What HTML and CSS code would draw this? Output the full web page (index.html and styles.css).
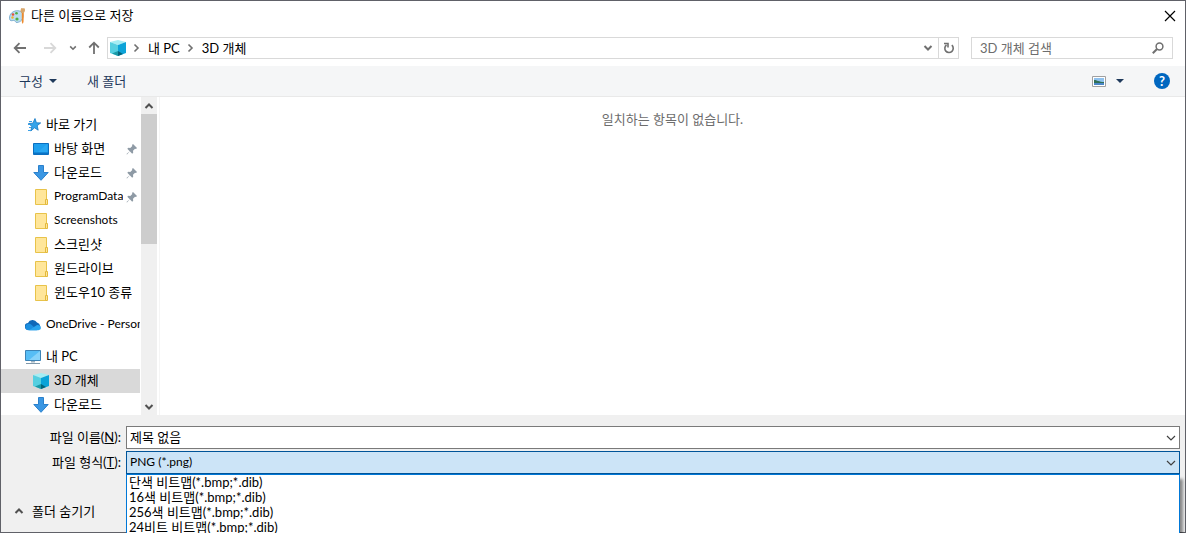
FILE: index.html
```html
<!DOCTYPE html>
<html lang="ko">
<head>
    <meta charset="UTF-8">
    <meta name="viewport" content="width=device-width, initial-scale=1.0">
    <title>다른 이름으로 저장</title>
    <link rel="stylesheet" href="styles.css">
</head>
<body>
    <!-- 공용 아이콘 -->
    <svg class="defs" aria-hidden="true">
        <symbol id="i-folder" viewBox="0 0 16 16">
            <path d="M2.5.5h11v15h-11z" fill="#ffe69a" stroke="#e8c34a"/>
            <path d="M12.500 10.500h2v5h-2z" fill="#ffe69a" stroke="#e3b93c"/>
        </symbol>
        <symbol id="i-cube" viewBox="0 0 16 16">
            <path d="M0 2 8 0l8 2-8 3z" fill="#a5edf3"/>
            <path d="M0 2 8 5v11l-8-3z" fill="#55cfe0"/>
            <path d="M16 2 8 5v11l8-3z" fill="#0ba3d8"/>
            <path d="M2 13.500l6-2.500v5z" fill="#1a9aa8"/>
            <path d="M8 11l5 3-5 2z" fill="#06647a"/>
        </symbol>
        <symbol id="i-down" viewBox="0 0 16 16">
            <path d="M5.500.5h5v7h4.700L8 15.300.8 7.500h4.700z" fill="#3b97e3" stroke="#2a80cc"/>
        </symbol>
        <symbol id="i-pin" viewBox="0 0 12 12">
            <path d="M7 1l4 4-1 1-1-.3-2 2 .2 2-1 1-2.400-2.400L1 11.500.5 11l3.200-2.800L1.300 5.800l1-1 2 .2 2-2L6 2z" fill="#8e9aa5"/>
        </symbol>
        <symbol id="i-chev" viewBox="0 0 10 10">
            <path d="M1.500 3 5 6.500 8.500 3" fill="none" stroke="currentColor" stroke-width="2"/>
        </symbol>
        <symbol id="i-thin" viewBox="0 0 10 10">
            <path d="M1 3l4 4 4-4" fill="none" stroke="currentColor" stroke-width="1.200"/>
        </symbol>
    </svg>

    <div class="window">
        <header class="title">
            <svg class="icon" viewBox="0 0 16 16">
                <path d="M6 3c4-1 7.500.5 8 4 .5 4-2 7-6 7.500-1.800.2-1.500-1.700-2.600-2-1.500-.4-3 .9-4.300-.3C-.3 10.500.4 4.500 6 3z" fill="#b9dcf0" stroke="#6da3c8" stroke-width=".8"/>
                <circle cx="4" cy="6.500" r="1.300" fill="#e8503a"/>
                <circle cx="7.500" cy="5.300" r="1.300" fill="#4fae45"/>
                <circle cx="3.500" cy="9.500" r="1.200" fill="#f7b42c"/>
                <circle cx="8" cy="11" r="1.600" fill="#4fae45"/>
                <path d="M12.800 5h2l-.3 9-.8 2-.9-2z" fill="#ee8a2c"/>
                <path d="M12.500 5c-2-2-.5-3-.3-5 1.500.8 2.500-.3 3.500.5.500 1.500.5 3-.9 4.500z" fill="#d9a66a"/>
            </svg>
            <h1>다른 이름으로 저장</h1>
            <button class="close" aria-label="닫기">
                <svg viewBox="0 0 12 12"><path d="M1 1l10 10M11 1 1 11" stroke="#000" stroke-width="1.200"/></svg>
            </button>
        </header>

        <nav class="nav">
            <button class="arrow" aria-label="뒤로"><svg viewBox="0 0 14 12"><path d="M13 6H2M6.500 1.200 1.700 6l4.800 4.800" fill="none" stroke="#707070" stroke-width="1.800"/></svg></button>
            <button class="arrow" aria-label="앞으로" disabled><svg viewBox="0 0 14 12"><path d="M1 6h11M7.500 1.200 12.300 6l-4.800 4.800" fill="none" stroke="#d8d8d8" stroke-width="1.800"/></svg></button>
            <button class="recent" aria-label="최근 위치"><svg viewBox="0 0 10 10"><use href="#i-chev"/></svg></button>
            <button class="up" aria-label="위로"><svg viewBox="0 0 12 14"><path d="M6 13V2M1.200 6.500 6 1.700l4.800 4.800" fill="none" stroke="#707070" stroke-width="1.800"/></svg></button>
            <div class="address">
                <svg class="icon"><use href="#i-cube"/></svg>
                <svg class="sep" viewBox="0 0 10 10"><path d="M3.500 1.500 7 5 3.500 8.500" fill="none" stroke="#707070" stroke-width="1.600"/></svg>
                <a href="#">내 PC</a>
                <svg class="sep" viewBox="0 0 10 10"><path d="M3.500 1.500 7 5 3.500 8.500" fill="none" stroke="#707070" stroke-width="1.600"/></svg>
                <a href="#">3D 개체</a>
                <button class="drop" aria-label="이전 위치"><svg viewBox="0 0 10 10"><use href="#i-chev"/></svg></button>
                <button class="reload" aria-label="새로 고침"><svg viewBox="0 0 12 12"><path d="M8.800 3.200A4.200 4.200 0 1 1 3.500 3M1 1.500h4v4" fill="none" stroke="#707070" stroke-width="1.600"/></svg></button>
            </div>
            <div class="search">
                <input type="text" aria-label="검색" placeholder="3D 개체 검색">
                <svg viewBox="0 0 12 12"><circle cx="7.500" cy="4.500" r="3.400" fill="none" stroke="#707070" stroke-width="1.500"/><path d="M5 7 .8 11.200" stroke="#707070" stroke-width="2"/></svg>
            </div>
        </nav>

        <div class="toolbar">
            <button>구성 <i class="caret"></i></button>
            <button>새 폴더</button>
            <button class="view" aria-label="보기">
                <svg viewBox="0 0 14 11"><path d="M.5.5h13v10H.5z" fill="#fff" stroke="#a0a0a0"/><path d="M2 2h10v7H2z" fill="#8fc1ee"/><path d="M2 4c3 0 5 2 10 2v1H2z" fill="#2f6f55"/><path d="M2 7h10v2H2z" fill="#4a86c8"/></svg>
                <i class="caret"></i>
            </button>
            <button class="help" aria-label="도움말">?</button>
        </div>

        <main class="body">
            <aside class="side">
                <ul class="tree">
                    <li class="root">
                        <svg class="icon" viewBox="0 0 16 16"><path d="M10 1.500l1.400 4.300 4.300.1-3.500 2.800 1 4.500-3.700-2.400L5.800 14l1-4.700L3.500 6.500l4.400-.3z" fill="#35a4ea" stroke="#1579c4" stroke-width=".8"/><path d="M4 4.500h3M3 7.500h2M4 10.500h2M3 13.500h3" stroke="#3aa0e6"/></svg>
                        <span>바로 가기</span>
                    </li>
                    <li>
                        <svg class="icon" viewBox="0 0 16 16"><path d="M.5 2.500h15v11H.5z" fill="#1fa0ee" stroke="#0b6fc0"/><path d="M1 11.500h14V13H1z" fill="#0b72c4"/><path d="M14 3 5 11h9z" fill="#2ba8f2"/></svg>
                        <span>바탕 화면</span><svg class="pin"><use href="#i-pin"/></svg>
                    </li>
                    <li><svg class="icon"><use href="#i-down"/></svg><span>다운로드</span><svg class="pin"><use href="#i-pin"/></svg></li>
                    <li><svg class="icon"><use href="#i-folder"/></svg><span class="en">ProgramData</span><svg class="pin"><use href="#i-pin"/></svg></li>
                    <li><svg class="icon"><use href="#i-folder"/></svg><span class="en">Screenshots</span></li>
                    <li><svg class="icon"><use href="#i-folder"/></svg><span>스크린샷</span></li>
                    <li><svg class="icon"><use href="#i-folder"/></svg><span>원드라이브</span></li>
                    <li><svg class="icon"><use href="#i-folder"/></svg><span>윈도우10 종류</span></li>
                    <li class="root gap">
                        <svg class="icon" viewBox="0 0 16 16"><path d="M3.500 13A3.500 3.500 0 0 1 3 6a5 5 0 0 1 9-.5A4 4 0 0 1 13 13z" fill="#0f68b8"/><path d="M3 13.200c-3-.7-3.500-4.500-1-6 2-1 4 0 5 1l5 5z" fill="#1b8fe0"/><path d="M4 13.200 12 8c3-.3 4.500 2 3.700 3.800-.5 1-1.500 1.400-2.400 1.400z" fill="#2aa5ee"/></svg>
                        <span class="en">OneDrive - Personal</span>
                    </li>
                    <li class="root gap">
                        <svg class="icon" viewBox="0 0 16 16"><path d="M.5 1.500h15v10H.5z" fill="#56bdf5" stroke="#3d83b5"/><path d="M15 2 4 11h11z" fill="#86d2fa"/><path d="M6 12h4v1.500H6z" fill="#9fb2c0"/><path d="M1 14.500h14" stroke="#7f98aa"/></svg>
                        <span>내 PC</span>
                    </li>
                    <li class="on"><svg class="icon"><use href="#i-cube"/></svg><span>3D 개체</span></li>
                    <li><svg class="icon"><use href="#i-down"/></svg><span>다운로드</span></li>
                </ul>
                <div class="scroll">
                    <button class="flip" aria-label="위로 스크롤"><svg viewBox="0 0 10 10"><use href="#i-chev"/></svg></button>
                    <div class="thumb"></div>
                    <button aria-label="아래로 스크롤"><svg viewBox="0 0 10 10"><use href="#i-chev"/></svg></button>
                </div>
            </aside>
            <section class="files">
                <p>일치하는 항목이 없습니다.</p>
            </section>
        </main>

        <form class="bottom">
            <label for="name">파일 이름(<u>N</u>):</label>
            <div class="field">
                <input id="name" type="text" value="제목 없음">
                <svg viewBox="0 0 10 10"><use href="#i-thin"/></svg>
            </div>
            <label for="type">파일 형식(<u>T</u>):</label>
            <div class="field open">
                <select id="type" class="en">
                    <option>PNG (*.png)</option>
                </select>
                <svg viewBox="0 0 10 10"><use href="#i-thin"/></svg>
                <ul class="menu">
                    <li>단색 비트맵(*.bmp;*.dib)</li>
                    <li>16색 비트맵(*.bmp;*.dib)</li>
                    <li>256색 비트맵(*.bmp;*.dib)</li>
                    <li>24비트 비트맵(*.bmp;*.dib)</li>
                </ul>
            </div>
            <button type="button" class="hide"><svg viewBox="0 0 10 10"><use href="#i-chev"/></svg>폴더 숨기기</button>
        </form>
    </div>
</body>
</html>
```

FILE: styles.css
```css
*{
    box-sizing:border-box;
}
body,h1,p,ul{
    margin:0;
    padding:0;
}
body{
    overflow:hidden;
}
ul{
    list-style-type:none;
}
body,button,input,select{
    font-family:Lato,"Noto Sans CJK KR",sans-serif;
    font-size:13px;
    line-height:16px;
    color:#000;
}
button,input,select{
    margin:0;
    padding:0;
    border:none;
    outline:none;
    background:none;
}
button{
    display:flex;
    align-items:center;
    justify-content:center;
}
a{
    color:inherit;
    text-decoration:none;
}
svg{
    display:block;
    flex:none;
    width:10px;
    height:10px;
}
.defs{
    position:absolute;
    width:0;
    height:0;
}
.icon{
    width:16px;
    height:16px;
}
.en{
    font-size:12px;
}
/* 창 */
.window{
    display:flex;
    flex-direction:column;
    height:100vh;
    border:1px solid #606168;
    background:#fff;
}
.title{
    display:flex;
    align-items:center;
    height:29px;
    padding:0 9px 0 8px;
}
.title h1{
    flex:1;
    margin-left:6px;
    padding-bottom:2px;
    font-size:13px;
    font-weight:normal;
}
.close svg{
    width:12px;
    height:12px;
}
/* 주소 표시줄 */
.nav{
    display:flex;
    align-items:center;
    height:36px;
    padding:0 12px;
    color:#707070;
}
.arrow{
    width:14px;
    margin-right:16px;
}
.arrow + .arrow{
    margin-right:12px;
}
.arrow svg{
    width:14px;
    height:12px;
}
.recent svg{
    width:8px;
    height:8px;
}
.up{
    margin:0 7px 0 11px;
}
.up svg{
    width:12px;
    height:14px;
}
.nav button{
    color:#707070;
}
.address{
    flex:1;
    display:flex;
    align-items:center;
    height:22px;
    padding-left:2px;
    border:1px solid #d9d9d9;
    color:#000;
}
.sep{
    margin:0 7px 0 5px;
}
.drop{
    width:20px;
    margin-left:auto;
}
.reload{
    width:20px;
    height:20px;
    border-left:1px solid #d9d9d9;
}
.reload svg{
    width:12px;
    height:12px;
}
.search{
    display:flex;
    align-items:center;
    width:202px;
    height:22px;
    margin-left:12px;
    padding:0 8px;
    border:1px solid #d9d9d9;
}
.search input{
    flex:1;
    min-width:0;
}
.search input::placeholder{
    color:#6d6d6d;
}
.search svg{
    width:12px;
    height:12px;
}
/* 도구 모음 */
.toolbar{
    display:flex;
    align-items:center;
    gap:30px;
    height:31px;
    padding:0 15px 0 18px;
    border-bottom:1px solid #e9e9e9;
    background:#f5f6f7;
}
.toolbar button{
    color:#1e395b;
}
.caret{
    margin-left:6px;
    border:4px solid transparent;
    border-top-color:#1e395b;
    border-bottom:none;
}
.toolbar .view{
    margin-left:auto;
}
.view svg{
    width:14px;
    height:11px;
}
.view .caret{
    margin-left:10px;
}
.toolbar .help{
    width:16px;
    height:16px;
    border-radius:50%;
    background:#0067c0;
    color:#fff;
    font-weight:bold;
}
/* 본문 */
.body{
    flex:1;
    display:flex;
    min-height:0;
    overflow:hidden;
}
.side{
    display:flex;
    width:159px;
    border-right:1px solid #f5f5f5;
}
.tree{
    width:139px;
    padding-top:16px;
    overflow:hidden;
}
.tree li{
    display:flex;
    align-items:center;
    height:24px;
    padding-left:32px;
    white-space:nowrap;
}
.tree .root{
    padding-left:24px;
}
.tree .gap{
    margin-top:8px;
}
.tree .on{
    background:#d9d9d9;
}
.tree span{
    min-width:0;
    margin-left:5px;
    padding-bottom:2px;
    overflow:hidden;
}
.tree li .pin{
    width:12px;
    height:12px;
    margin:0 2px 0 auto;
}
.scroll{
    display:flex;
    flex-direction:column;
    width:16px;
    margin-left:1px;
    background:#f0f0f0;
}
.scroll button{
    height:17px;
    color:#505050;
}
.scroll .thumb{
    height:130px;
    margin-bottom:auto;
    background:#cdcdcd;
}
.flip svg,.hide svg{
    transform:rotate(180deg);
}
.files{
    flex:1;
    padding-top:14px;
    text-align:center;
    color:#6d6d6d;
}
/* 파일 이름, 형식 */
.bottom{
    display:grid;
    grid-template-columns:120px 1fr;
    gap:2px 5px;
    align-items:center;
    padding:11px 5px 13px 0;
    background:#f0f0f0;
}
.bottom label{
    padding-bottom:2px;
    text-align:right;
}
.field{
    position:relative;
    display:flex;
    align-items:center;
    height:23px;
    padding:0 3px;
    border:1px solid #7a7a7a;
    background:#fff;
}
.field input,.field select{
    flex:1;
    min-width:0;
    padding-bottom:2px;
    appearance:none;
}
.field > svg{
    color:#404040;
}
.field.open{
    border-color:#005499;
    background:#cce4f7;
}
.menu{
    position:absolute;
    top:22px;
    left:-1px;
    right:-1px;
    padding:0 2px;
    border:1px solid #0078d7;
    background:#fff;
    box-shadow:3px 5px 3px #00000070;
}
.menu li{
    line-height:15px;
}
.hide{
    grid-column:1 / 3;
    justify-self:start;
    gap:8px;
    margin:27px 0 0 13px;
}
.hide svg{
    color:#505050;
}
```
